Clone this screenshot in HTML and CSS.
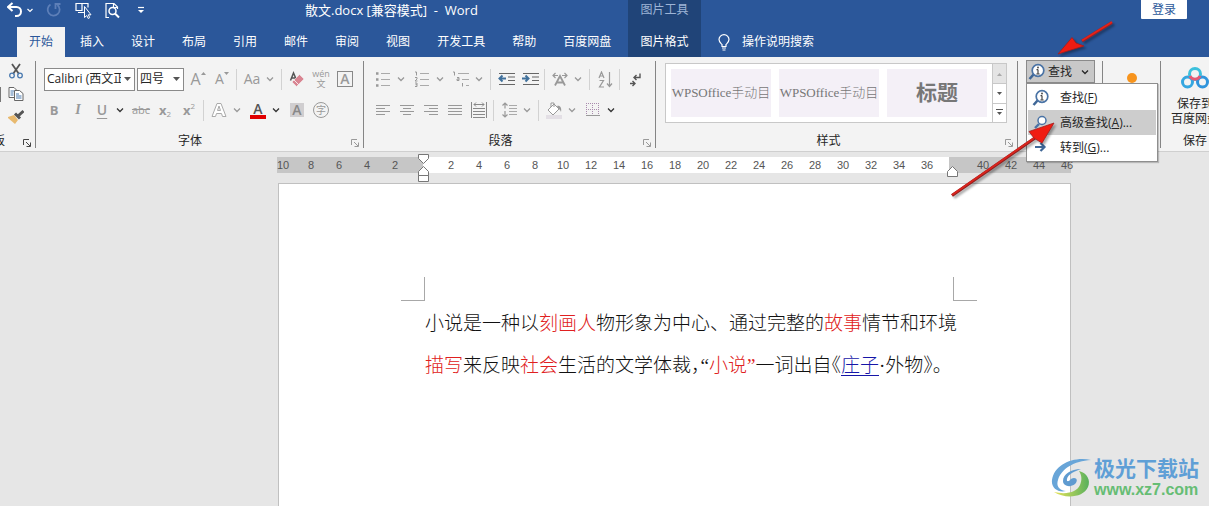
FILE: index.html
```html
<!DOCTYPE html>
<html lang="zh-CN">
<head>
<meta charset="utf-8">
<title>散文.docx - Word</title>
<link rel="stylesheet" href="styles.css">
</head>
<body>
<svg class="defs" aria-hidden="true">
  <symbol id="chev" viewBox="0 0 8 8"><path d="M1 2.500l3 3 3-3" fill="none" stroke="currentColor" stroke-width="1.300"/></symbol>
  <symbol id="launch" viewBox="0 0 10 10"><path d="M1.500 7V1.500H7M4 4l4 4M8.500 4.500v4h-4" fill="none" stroke="currentColor"/></symbol>
  <symbol id="findinfo" viewBox="0 0 18 18"><path d="M6 11L1.500 16" stroke="#3f6797" stroke-width="2.600"/><circle cx="10" cy="7.500" r="5.800" fill="#fff" stroke="#4a73a5" stroke-width="1.700"/><path d="M10 6.500v4.500M8.500 6.700h1.500M8.300 11h3.400" stroke="#444" stroke-width="1.200"/><circle cx="10" cy="4.500" r=".9" fill="#444"/></symbol>
</svg>

<header class="header">
  <div class="header-left">
    <div class="title-row">
      <div class="quick">
        <button class="qbtn" aria-label="撤消"><svg width="26" height="16" viewBox="0 0 26 16"><path d="M3 5h7.500a4.500 4.500 0 0 1 0 9H9M6.500 1L2 5l4.500 4" fill="none" stroke="#fff" stroke-width="2" transform="translate(-1)"/><path d="M20.500 7l2.500 2.500L25.500 7" fill="none" stroke="#fff" stroke-width="1.200"/></svg></button>
        <button class="qbtn" aria-label="恢复"><svg width="16" height="16" viewBox="0 0 16 16"><path d="M4.500 2.500a6 6 0 1 0 7 .5M9.500 7V2h5" fill="none" stroke="#5d7fb8" stroke-width="1.800"/></svg></button>
        <button class="qbtn" aria-label="选择对象"><svg width="17" height="17" viewBox="0 0 17 17"><path d="M1 8.500V1.500h6v7zM7 3.500V1.500h6v4" fill="none" stroke="#fff" stroke-width="1.200"/><path d="M3 10.500h6" stroke="#fff"/><path d="M9.500 4.500v11l2.300-2 1.400 3 1.500-.8-1.400-2.900h2.700z" fill="#2b579a" stroke="#fff" stroke-width="1"/></svg></button>
        <button class="qbtn" aria-label="打印预览"><svg width="15" height="17" viewBox="0 0 15 17"><path d="M4 15.500H1v-14h8l3.500 3.500v2M8.500 1.500v4h4" fill="none" stroke="#fff" stroke-width="1.200"/><circle cx="7.500" cy="9" r="3.500" fill="#2b579a" stroke="#fff" stroke-width="1.500"/><path d="M10 11.500l4 4" stroke="#fff" stroke-width="2"/></svg></button>
        <button class="qbtn" aria-label="自定义快速访问工具栏"><svg width="8" height="8" viewBox="0 0 8 8"><path d="M1 1.500h6" stroke="#fff" stroke-width="1.200"/><path d="M1 4h6L4 7z" fill="#fff"/></svg></button>
      </div>
      <h1 class="doc-title">散文.docx [兼容模式] &nbsp;-&nbsp; Word</h1>
    </div>
    <nav class="tabs">
      <button class="tab active">开始</button><button class="tab">插入</button><button class="tab">设计</button><button class="tab">布局</button><button class="tab">引用</button><button class="tab">邮件</button><button class="tab">审阅</button><button class="tab">视图</button><button class="tab">开发工具</button><button class="tab">帮助</button><button class="tab">百度网盘</button>
    </nav>
  </div>
  <div class="context">
    <span class="context-label">图片工具</span>
    <button class="tab context-tab">图片格式</button>
  </div>
  <div class="header-right">
    <div class="login-row"><button class="login">登录</button></div>
    <button class="tell"><svg width="12" height="17" viewBox="0 0 12 17"><path d="M4 12.500v-2C2.500 9 1 8 1 5.600a5 5 0 0 1 10 0C11 8 9.500 9 8 10.500v2z" fill="none" stroke="#fff" stroke-width="1.200"/><path d="M4 14h4M4.500 16h3" stroke="#fff"/></svg>操作说明搜索</button>
  </div>
</header>

<main class="ribbon">
  <section class="group clipboard">
    <div class="clip-tools">
      <span class="paste-edge"></span>
      <div class="clip-icons">
        <button class="icon" aria-label="剪切"><svg width="16" height="16" viewBox="0 0 16 16"><path d="M4 1l7 10M12 1L5 11" stroke="#555" stroke-width="1.800"/><circle cx="4" cy="12.500" r="2.300" fill="none" stroke="#4a7ab0" stroke-width="1.300"/><circle cx="12" cy="12.500" r="2.300" fill="none" stroke="#4a7ab0" stroke-width="1.300"/></svg></button>
        <button class="icon" aria-label="复制"><svg width="16" height="16" viewBox="0 0 16 16"><path d="M1 1.500h5l3 3v7H1z" fill="#fff" stroke="#666"/><path d="M2.500 5h4M2.500 7h3M2.500 9h3" stroke="#4a7ab0"/><path d="M6.500 4.500h5l3.500 3v7H6.500z" fill="#fff" stroke="#666"/><path d="M8 8h3M8 10h5.500M8 12h5.500" stroke="#4a7ab0"/></svg></button>
        <button class="icon" aria-label="格式刷"><svg width="16" height="16" viewBox="0 0 16 16"><path d="M0 8l6-2 4 5-3 4-7-6z" fill="#e8b96e"/><path d="M7 4.500l5 5M10 7L15.500 2" stroke="#555" stroke-width="3"/></svg></button>
      </div>
    </div>
    <div class="foot"><span class="clip-name"><span>剪贴板</span></span><svg class="launch dark"><use href="#launch"/></svg></div>
  </section>

  <section class="group font-group">
    <div class="row first">
      <label class="combo family"><select aria-label="字体"><option>Calibri (西文正文)</option></select><svg width="7" height="4"><path d="M0 0h7L3.500 4z" fill="#555"/></svg></label>
      <label class="combo size"><select aria-label="字号"><option>四号</option></select><svg width="7" height="4"><path d="M0 0h7L3.500 4z" fill="#555"/></svg></label>
      <button class="tool grow">A<svg width="5" height="3"><path d="M0 3h5L2.500 0z" fill="#999"/></svg></button>
      <button class="tool grow small">A<svg width="5" height="3"><path d="M0 0h5L2.500 3z" fill="#999"/></svg></button>
      <i class="sep"></i>
      <button class="tool aa">Aa</button><button class="chev" aria-label="更多"><svg><use href="#chev"/></svg></button>
      <i class="sep"></i>
      <button class="tool" aria-label="清除格式"><svg width="16" height="16" viewBox="0 0 16 16"><path d="M1.500 9.500L4.500 2l3 7M2.500 7h4" fill="none" stroke="#555" stroke-width="1.500"/><path d="M3 11l7.500-7.500L15 8l-7.500 7.500z" fill="#d98592" stroke="#f3f3f3" stroke-width=".6"/><path d="M5 9l4.500 4.500" stroke="#fff" stroke-width=".8"/></svg></button>
      <button class="tool pinyin"><span>wén</span><span>文</span></button>
      <button class="tool"><span class="boxed">A</span></button>
    </div>
    <div class="row">
      <button class="tool"><b>B</b></button><button class="tool ital">I</button><button class="tool under">U</button><button class="chev dark" aria-label="更多"><svg><use href="#chev"/></svg></button>
      <button class="tool strike">abc</button><button class="tool script"><b>x</b><sub>2</sub></button><button class="tool script"><b>x</b><sup>2</sup></button>
      <i class="sep"></i>
      <button class="tool" aria-label="文本效果"><svg width="16" height="16" viewBox="0 0 16 16"><path d="M1 14.500L6 1.500h4l5 13h-3.500l-1-3h-5l-1 3zM6.500 8.500h3L8 4z" fill="#fff" stroke="#aaa"/></svg></button><button class="chev" aria-label="更多"><svg><use href="#chev"/></svg></button>
      <button class="tool"><span class="redbar">A</span></button><button class="chev dark" aria-label="更多"><svg><use href="#chev"/></svg></button>
      <button class="tool"><span class="shade">A</span></button>
      <button class="tool"><span class="ring">字</span></button>
    </div>
    <div class="foot"><span class="name">字体</span><svg class="launch"><use href="#launch"/></svg></div>
  </section>

  <section class="group para-group">
    <div class="row first">
      <button class="tool" aria-label="项目符号"><svg width="16" height="16" viewBox="0 0 16 16"><path d="M6 2.500h9M6 8.500h9M6 14.500h9" stroke="#aaa"/><path d="M1 2.500h2.500M1 8.500h2.500M1 14.500h2.500" stroke="#999" stroke-width="2.500"/></svg></button><button class="chev" aria-label="更多"><svg><use href="#chev"/></svg></button>
      <button class="tool" aria-label="编号"><svg width="16" height="16" viewBox="0 0 16 16"><path d="M6 2.500h9M6 8.500h9M6 14.500h9" stroke="#aaa"/><path d="M1 1h1.500v3.500M1 6.500h2v1.500L1 10h2.500M1 12h2v3.500H1M1.500 13.700H3" fill="none" stroke="#999"/></svg></button><button class="chev" aria-label="更多"><svg><use href="#chev"/></svg></button>
      <button class="tool" aria-label="多级列表"><svg width="18" height="16" viewBox="0 0 18 16"><path d="M6 2.500h11M10 8.500h7M14 14.500h3" stroke="#aaa"/><path d="M1 1h1.500v3.500M5 6.500h2v3H5V8h2M10.500 12v3.500" fill="none" stroke="#999"/></svg></button><button class="chev" aria-label="更多"><svg><use href="#chev"/></svg></button>
      <i class="sep"></i>
      <button class="tool" aria-label="减少缩进量"><svg width="17" height="16" viewBox="0 0 17 16"><path d="M1 2.500h16M10 6h7M10 9.500h7M1 13.500h16" stroke="#666" stroke-width="1.200"/><path d="M1.500 7.500H8M4.500 4.500l-3 3 3 3" fill="none" stroke="#41719c" stroke-width="2"/></svg></button>
      <button class="tool" aria-label="增加缩进量"><svg width="17" height="16" viewBox="0 0 17 16"><path d="M1 2.500h16M10 6h7M10 9.500h7M1 13.500h16" stroke="#666" stroke-width="1.200"/><path d="M0 7.500h6.500M3.500 4.500l3 3-3 3" fill="none" stroke="#41719c" stroke-width="2"/></svg></button>
      <i class="sep"></i>
      <button class="tool" aria-label="中文版式"><svg width="16" height="16" viewBox="0 0 16 16"><path d="M3 14.500L8 5l5 9.500M5 11.500h6" fill="none" stroke="#999" stroke-width="1.800"/><path d="M1 4.500h5M3.500 2L1 4.500 3.500 7M10 4.500h5M12.500 2L15 4.500 12.500 7" fill="none" stroke="#999" stroke-width="1.200"/></svg></button><button class="chev" aria-label="更多"><svg><use href="#chev"/></svg></button>
      <i class="sep"></i>
      <button class="tool" aria-label="排序"><svg width="15" height="17" viewBox="0 0 15 17"><path d="M1 7l2.500-6L6 7M2 5h3M1.500 9.500h4L1.500 16h4.500M11.500 1v14M9 12.500l2.500 3 2.500-3" fill="none" stroke="#999" stroke-width="1.200"/></svg></button>
      <i class="sep"></i>
      <button class="tool" aria-label="显示编辑标记"><svg width="14" height="16" viewBox="0 0 14 16"><path d="M12 2.500v4H6M8.500 4L6 6.500 8.500 9M2 12.500h5M4.500 10L7 12.500 4.500 15" fill="none" stroke="#555" stroke-width="1.400"/></svg></button>
    </div>
    <div class="row">
      <button class="tool" aria-label="左对齐"><svg width="14" height="14"><path d="M0 2.500h14M0 5.500h9M0 8.500h14M0 11.500h9" stroke="#999"/></svg></button>
      <button class="tool" aria-label="居中"><svg width="14" height="14"><path d="M0 2.500h14M3 5.500h8M0 8.500h14M3 11.500h8" stroke="#999"/></svg></button>
      <button class="tool" aria-label="右对齐"><svg width="14" height="14"><path d="M0 2.500h14M5 5.500h9M0 8.500h14M5 11.500h9" stroke="#999"/></svg></button>
      <button class="tool" aria-label="两端对齐"><svg width="14" height="14"><path d="M0 2.500h14M0 5.500h14M0 8.500h14M0 11.500h14" stroke="#999"/></svg></button>
      <button class="tool" aria-label="分散对齐"><svg width="16" height="16"><path d="M.5 0v16M15.500 0v16M2 6.500h12M2 9.500h12M2 12.500h12M2 15.500h12" stroke="#888"/><path d="M3 2.500h10M5 .5l-2 2 2 2M11 .5l2 2-2 2" fill="none" stroke="#888"/></svg></button>
      <i class="sep"></i>
      <button class="tool" aria-label="行距"><svg width="15" height="16"><path d="M7 3.500h8M7 6.500h8M7 9.500h8M7 12.500h8" stroke="#aaa"/><path d="M3 1v5.500M.5 3.500L3 1l2.500 2.500M3 9v6M.5 12.500L3 15l2.500-2.500" fill="none" stroke="#999" stroke-width="1.200"/></svg></button><button class="chev" aria-label="更多"><svg><use href="#chev"/></svg></button>
      <i class="sep"></i>
      <button class="tool" aria-label="底纹"><svg width="16" height="17"><path d="M0 13h16v4H0z" fill="#e3dfe5"/><path d="M2 8l6-6 5 5-6 6zM5 5V1h3v4" fill="#fff" stroke="#999"/><path d="M11 4c3-1 5 2 4 6-1-3-2-2-4-6z" fill="#999"/></svg></button><button class="chev" aria-label="更多"><svg><use href="#chev"/></svg></button>
      <button class="tool" aria-label="边框"><svg width="14" height="14"><path d="M.5 0v12M6.500 0v12M12.500 0v12M0 .5h14M0 6.500h14" stroke="#a98bad" stroke-dasharray="1 1"/><path d="M0 12.500h14" stroke="#999"/></svg></button><button class="chev dark" aria-label="更多"><svg><use href="#chev"/></svg></button>
    </div>
    <div class="foot"><span class="name">段落</span><svg class="launch"><use href="#launch"/></svg></div>
  </section>

  <section class="group style-group">
    <div class="gallery">
      <div class="styles">
        <button class="style">WPSOffice手动目</button>
        <button class="style">WPSOffice手动目</button>
        <button class="style heading">标题</button>
      </div>
      <div class="scroller">
        <button class="off" aria-label="上一行"><svg width="7" height="4"><path d="M1 4h5L3.500 1z" fill="#aaa"/></svg></button>
        <button aria-label="下一行"><svg width="5" height="3"><path d="M0 0h5L2.500 3z" fill="#555"/></svg></button>
        <button aria-label="其他"><svg width="7" height="7"><path d="M0 .5h7" stroke="#555"/><path d="M1 3h5L3.500 6z" fill="#555"/></svg></button>
      </div>
    </div>
    <div class="foot"><span class="name">样式</span><svg class="launch"><use href="#launch"/></svg></div>
  </section>

  <section class="group edit-group">
    <button class="find"><svg width="18" height="18"><use href="#findinfo"/></svg><span>查找</span><svg class="find-chev"><use href="#chev"/></svg></button>
    <div class="menu" role="menu">
      <button class="item" role="menuitem"><svg width="18" height="18"><use href="#findinfo"/></svg><span>查找(<u>F</u>)</span></button>
      <button class="item current" role="menuitem"><svg width="18" height="18" viewBox="0 0 18 18"><path d="M7 10l-4 4" stroke="#4a73a5" stroke-width="2.400"/><circle cx="10" cy="6.500" r="4" fill="#fff" stroke="#4a73a5" stroke-width="1.500"/></svg><span>高级查找(<u>A</u>)...</span></button>
      <button class="item" role="menuitem"><svg width="18" height="18" viewBox="0 0 18 18"><path d="M3 8h9M8.500 4l4 4-4 4" fill="none" stroke="#3f6797" stroke-width="2.200"/></svg><span>转到(<u>G</u>)...</span></button>
    </div>
  </section>

  <section class="group dot-group"><span class="dot"></span></section>

  <section class="group save-group">
    <button class="save"><svg width="28" height="22" viewBox="0 0 28 22"><circle cx="14" cy="7" r="5.500" fill="none" stroke="#3cc0dc" stroke-width="3"/><circle cx="6.500" cy="15" r="5" fill="none" stroke="#35a7e0" stroke-width="3"/><circle cx="21.500" cy="15" r="5" fill="none" stroke="#2f94dc" stroke-width="3"/><path d="M9 9a5.500 5.500 0 0 0 10 0" fill="none" stroke="#e65a73" stroke-width="3"/></svg><span>保存到</span><span>百度网盘</span></button>
    <div class="foot"><span class="name">保存</span></div>
  </section>
</main>

<div class="workspace">
  <div class="ruler">
    <div class="seg before"><span>10</span><span>8</span><span>6</span><span>4</span><span>2</span></div>
    <div class="seg inside"><span>2</span><span>4</span><span>6</span><span>8</span><span>10</span><span>12</span><span>14</span><span>16</span><span>18</span><span>20</span><span>22</span><span>24</span><span>26</span><span>28</span><span>30</span><span>32</span><span>34</span><span>36</span></div>
    <div class="seg after"><span>40</span><span>42</span><span>44</span><span>46</span></div>
    <svg class="indent-left" width="11" height="28" viewBox="0 0 11 28"><path d="M.5.5h10v4l-5 5-5-5zM5.500 12.500l5 5v4H.5v-4zM.5 21.500h10v6H.5z" fill="#fff" stroke="#777"/></svg>
    <svg class="indent-right" width="11" height="11" viewBox="0 0 11 11"><path d="M5.500.5l5 5v5H.5v-5z" fill="#fff" stroke="#777"/></svg>
  </div>
  <article class="page">
    <div class="crop"><i></i><i></i></div>
    <p class="text">小说是一种以<em>刻画人</em>物形象为中心、通过完整的<em>故事</em>情节和环境<br><em>描写</em>来反映<em>社会</em>生活的文学体裁<span class="half">，</span>“<em>小说”</em>一词出自<span class="half">《</span><a href="#">庄子</a>·外物<span class="half">》</span>。</p>
  </article>
</div>

<div class="watermark">
  <svg width="44" height="42" viewBox="0 0 44 42"><defs><linearGradient id="wg" x1="0" y1="0" x2="1" y2="0"><stop offset="0" stop-color="#e8e45a"/><stop offset="1" stop-color="#58b05c"/></linearGradient></defs><path d="M42 3C24-1 5 8 3 23c-1 8 6 13 14 11-7-1-10-5-8-11C12 12 25 4 42 3z" fill="#68a5d8"/><path d="M32 12c-10 0-18 5-18 12 0 5 7 7 12 3 3-3 2-6-1-6-4 0-4 4-7 3-1-5 5-9 14-12z" fill="#5f9bd0"/><path d="M30 14c8 2 12 9 9 16-5 11-23 12-34 5 13 3 23 0 26-7 2-5 2-9-1-14z" fill="url(#wg)"/></svg>
  <div class="mark-text"><span class="mark-name">极光下载站</span><span class="mark-url">www.xz7.com</span></div>
</div>

<svg class="arrow arrow-top" width="60" height="40" viewBox="0 0 60 40"><path d="M56 4.500L26 23" stroke="#9e1f1f" stroke-width="3"/><path d="M56 4L26 22.500" stroke="#e5231b" stroke-width="1.800"/><path d="M2 36l14-16.500 4 5.500 8 3z" fill="#f01c12" stroke="#a51c1c" stroke-width=".8"/></svg>
<svg class="arrow arrow-menu" width="110" height="80" viewBox="0 0 110 80"><path d="M3 75.500L86 18" stroke="#8e1f1f" stroke-width="3.200"/><path d="M3 75L86 17.500" stroke="#d9241d" stroke-width="2"/><path d="M105 3L80 11.500l5 6.500 8 5z" fill="#f01c12" stroke="#a51c1c" stroke-width=".8"/></svg>
</body>
</html>
```

FILE: styles.css
```css
* { box-sizing: border-box; }
html { height: 100%; }
body {
  margin: 0;
  position: relative;
  min-height: 100%;
  display: flex;
  flex-direction: column;
  overflow: hidden;
  background: #e6e6e6;
  color: #262626;
  font: 12px/16px "Open Sans", "Noto Sans CJK SC", sans-serif;
}
button, select {
  margin: 0;
  padding: 0;
  border: 0;
  background: none;
  color: inherit;
  font: inherit;
}
svg { display: block; flex: none; }
.defs { position: absolute; width: 0; height: 0; }

/* header */
.header { display: flex; background: #2b579a; color: #fff; }
.header-left { flex: none; width: 628px; }
.title-row { display: flex; align-items: center; height: 20px; margin-bottom: 7px; }
.quick { display: flex; align-items: center; gap: 13px; width: 305px; padding-left: 7px; }
.qbtn:last-child { margin-left: 4px; }
.doc-title { margin: 0; font-size: 13px; font-weight: 400; white-space: nowrap; }
.tabs { display: flex; gap: 3px; padding-left: 17px; }
.tab { height: 30px; padding: 0 12px; white-space: nowrap; }
.tab.active { background: #f3f3f3; color: #2b579a; }
.context { display: flex; flex-direction: column; align-items: center; justify-content: space-between; width: 73px; background: #204478; }
.context-label { line-height: 20px; color: #9db4d6; }
.header-right { flex: 1; display: flex; flex-direction: column; justify-content: space-between; }
.login-row { display: flex; justify-content: flex-end; padding-right: 22px; }
.login { width: 46px; height: 19px; background: #fff; color: #2b579a; border-radius: 0 0 1px 1px; }
.tell { display: flex; align-items: center; gap: 12px; height: 30px; padding-left: 17px; }

/* ribbon */
.ribbon { display: flex; height: 95px; padding: 4px 0 3px; background: #f3f3f3; border-bottom: 1px solid #cfcfcf; }
.group { flex: none; position: relative; display: flex; flex-direction: column; border-right: 1px solid #858585; }
.row { display: flex; align-items: center; height: 24px; color: #999; }
.row.first { margin: 6px 0 7px; }
.foot { display: flex; align-items: center; justify-content: center; margin-top: auto; height: 14px; }
.name { flex: 1; padding-right: 12px; text-align: center; }
.save-group .name { padding-right: 0; }
.launch { width: 10px; height: 10px; margin: 4px 3px 0 0; color: #999; }
.launch.dark { color: #444; }
.tool { display: flex; align-items: center; justify-content: center; width: 24px; height: 24px; font-size: 14px; line-height: 16px; }
.chev { width: 15px; height: 24px; padding-left: 2px; color: #999; }
.chev svg { width: 8px; height: 8px; }
.chev.dark { color: #333; }
.sep { width: 6px; height: 21px; background: linear-gradient(90deg, transparent 2px, #d2d2d2 2px, #d2d2d2 3px, transparent 3px); }

.clipboard { width: 36px; }
.clip-tools { display: flex; align-items: center; gap: 7px; padding-top: 2px; }
.paste-edge { width: 1px; height: 15px; background: #777; }
.clip-icons { display: flex; flex-direction: column; gap: 7px; }
.icon { height: 16px; }
.clipboard .foot { justify-content: space-between; }
.clip-name { display: flex; justify-content: flex-end; width: 5px; overflow: hidden; white-space: nowrap; }

.font-group { width: 328px; padding-left: 6px; }
.font-group .first { padding-left: 2px; }
.combo { display: flex; align-items: center; gap: 3px; height: 23px; margin-right: 2px; padding: 0 3px 0 2px; border: 1px solid #8a8a8a; background: #fff; color: #262626; }
.combo select { flex: 1; min-width: 0; appearance: none; overflow: hidden; text-overflow: clip; font-size: 12px; }
.family { width: 91px; }
.size { width: 47px; }
.grow { align-items: center; font-size: 16px; }
.grow svg { margin-bottom: 12px; }
.grow.small { font-size: 14px; }
.aa { font-size: 14px; }
.pinyin { flex-direction: column; font-size: 9px; line-height: 10px; }
.boxed { width: 16px; height: 16px; border: 1px solid #888; line-height: 14px; font-weight: 600; }
.ital { font-family: "Liberation Serif", serif; font-style: italic; font-weight: 700; }
.under { text-decoration: underline; font-weight: 600; text-underline-offset: 3px; }
.tool b { font-size: 13px; }
.strike { text-decoration: line-through; font-size: 11px; }
.script sub, .script sup { font-size: 8px; line-height: 8px; }
.script sup { margin-bottom: 8px; }
.script sub { margin-top: 8px; }
.redbar { width: 16px; height: 17px; line-height: 14px; border-bottom: 4px solid #e00000; color: #555; font-weight: 600; }
.shade { width: 14px; height: 14px; line-height: 14px; background: #d0ced0; color: #888; font-weight: 600; }
.ring { width: 16px; height: 16px; border: 1px solid #999; border-radius: 50%; font-size: 10px; line-height: 14px; }

.para-group { width: 292px; padding-left: 7px; }

.style-group { width: 362px; padding-left: 9px; }
.gallery { display: flex; width: 342px; height: 60px; margin-top: 2px; border: 1px solid #c8c8c8; background: #fff; }
.styles { flex: 1; display: flex; gap: 8px; padding: 5px; }
.style { width: 100px; background: #f4f0f7; color: #777; font: 300 13px/20px "Liberation Serif", "Noto Sans CJK SC", serif; text-align: center; white-space: nowrap; }
.style.heading { font-size: 21px; font-weight: 700; }
.scroller { display: grid; grid-template-rows: repeat(3, 1fr); width: 15px; border-left: 1px solid #c8c8c8; }
.scroller button { display: flex; align-items: center; justify-content: center; }
.scroller button + button { border-top: 1px solid #c8c8c8; }
.off { background: #e4e4e4; }

.edit-group { width: 85px; padding-left: 8px; }
.find { display: flex; align-items: center; gap: 2px; width: 69px; height: 23px; margin-top: -1px; padding: 0 5px 0 1px; background: #c8c8c8; border: 1px solid #8a8a8a; }
.find span { flex: 1; text-align: left; }
.find-chev { width: 8px; height: 8px; }
.menu { position: absolute; z-index: 3; top: 22px; left: 8px; width: 132px; padding: 1px; background: #fff; border: 1px solid #8e8e8e; box-shadow: 1px 1px 1px #0003; }
.item { display: flex; align-items: center; gap: 10px; width: 100%; height: 25px; padding-left: 4px; white-space: nowrap; }
.item.current { background: #cdcdcd; }

.dot-group { width: 58px; align-items: center; padding-top: 12px; }
.dot { width: 10px; height: 10px; border-radius: 50%; background: #f7941d; }

.save-group { width: 68px; border-right: 0; }
.save { display: flex; flex-direction: column; align-items: center; padding-top: 6px; line-height: 15px; white-space: nowrap; }
.save svg { margin-bottom: 7px; }

/* ruler and page */
.workspace { flex: 1; display: flex; flex-direction: column; margin-left: 277px; padding-top: 5px; }
.ruler { position: relative; display: flex; height: 16px; margin-bottom: 10px; color: #555; font: 11px/17px "Liberation Sans", sans-serif; }
.seg { display: flex; }
.seg span { flex: none; width: 28px; text-align: center; }
.before { justify-content: flex-end; width: 146px; padding-right: 14px; background: #c6c6c6; }
.inside { width: 526px; padding-left: 14px; background: #fff; }
.after { width: 122px; padding-left: 20px; background: #c6c6c6; }
.indent-left { position: absolute; top: -3px; left: 141px; }
.indent-right { position: absolute; top: 9px; left: 670px; }
.page { flex: 1; width: 793px; margin-left: 1px; padding: 93px 93px 0 122px; background: #fff; border: 1px solid #c0c0c0; border-bottom: 0; }
.crop { display: flex; justify-content: space-between; }
.crop i { width: 24px; height: 24px; border: solid #a8a8a8; border-width: 0 1px 1px 0; }
.crop i + i { border-width: 0 0 1px 1px; }
.text { margin: 2px 0 0 24px; color: #111; font: 300 19px/42px "Liberation Serif", "Noto Sans CJK SC", serif; white-space: nowrap; }
.text em { font-style: normal; color: #e02020; }
.text a { color: #1616a8; text-underline-offset: 3px; }
.half { font-feature-settings: "halt"; }

.watermark { position: absolute; right: 10px; bottom: 6px; display: flex; align-items: center; gap: 1px; }
.mark-text { display: flex; flex-direction: column; }
.mark-name { color: #5f9fd6; font-size: 21px; line-height: 24px; font-weight: 700; }
.mark-url { color: #66bd74; font: 700 16px/20px "Liberation Sans", sans-serif; }

.arrow { position: absolute; z-index: 4; pointer-events: none; filter: drop-shadow(2px 2px 1px #0005); }
.arrow-top { top: 18px; left: 1056px; }
.arrow-menu { top: 120px; left: 949px; }
```
